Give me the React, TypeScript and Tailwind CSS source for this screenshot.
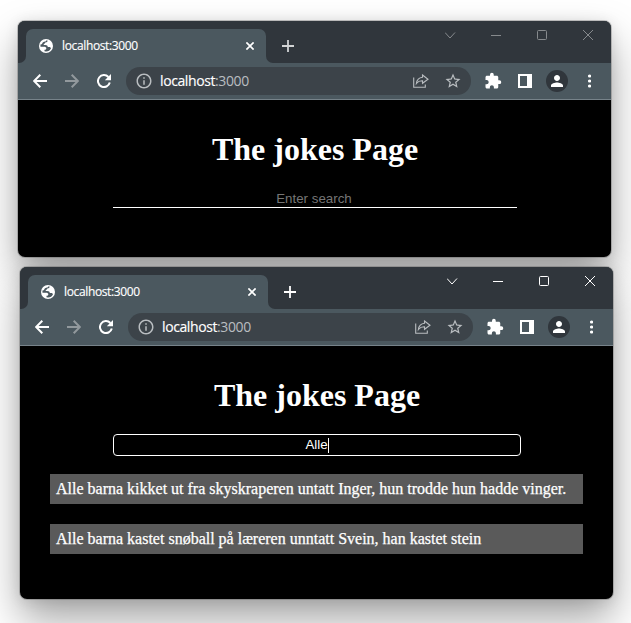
import type { ReactNode } from "react";
import { MdExtension, MdPerson, MdInfoOutline, MdStarBorder } from "react-icons/md";

function WindowControls({ active }: { active: boolean }) {
  return (
    <div className={`ml-auto flex items-start ${active ? "text-white" : "text-[#868a8d]"}`}>
      <svg className="mt-[9px] mr-[35px] h-[11px] w-[11px]" viewBox="0 0 11 11" fill="none" stroke="currentColor">
        <path d="M0 2.5 5 8 10 2.5" />
      </svg>
      <svg className="mt-[9px] mr-[36px] h-[11px] w-[10px]" viewBox="0 0 10 11" fill="none" stroke="currentColor">
        <path d="M0 5.5H10" />
      </svg>
      <svg className="mt-[9px] mr-[36px] h-[10px] w-[10px]" viewBox="0 0 10 10" fill="none" stroke="currentColor">
        <rect x=".5" y=".5" width="9" height="9" rx="1" />
      </svg>
      <svg className="mt-[9px] mr-[18px] h-[10px] w-[10px]" viewBox="0 0 10 10" fill="none" stroke="currentColor">
        <path d="M0 0 10 10M10 0 0 10" />
      </svg>
    </div>
  );
}

function GlobeIcon() {
  return (
    <svg className="ml-[2px] h-[14px] w-[14px]" viewBox="0 0 14 14">
      <circle cx="7" cy="7" r="7" fill="currentColor" />
      <path
        fill="#4b585f"
        d="M8.6 1.5C8.7 2.7 7.8 3.4 6.3 3.4 5.9 4.7 5.2 4.6 4.6 4.9 4.7 5.8 5.1 6 6.1 6 8 6 8.8 6.8 8.8 8H10.4C11 8 11.3 8.6 12.1 8.9 11.2 11.1 9.3 12.5 7 12.5L5.5 12.3V10.8C6.5 10.8 7.4 10.5 7.3 9.3 7.2 8.3 6.4 7.8 5.3 7.8H1.5C1.3 6.8 1.4 6 1.7 5.2H3C3.3 3.5 4.6 2.5 6.2 2.5 6.8 2.5 7 1.7 7.1 1.4Z"
      />
    </svg>
  );
}

function TitleBar({ active }: { active: boolean }) {
  return (
    <div className="flex h-[42px] bg-[#4b585f]">
      <div className="h-[42px] w-2 rounded-br-[7px] bg-[#30363c]" />
      <div className="h-[42px] w-60 bg-[linear-gradient(#30363c_50%,#4b585f_50%)] pt-2">
        <div className="flex h-[34px] items-center rounded-t-[7px] bg-[#4b585f] pl-[11px] text-white">
          <GlobeIcon />
          <span className="ml-[9px] font-['Open_Sans','Noto_Sans',sans-serif] text-[12px] leading-4 tracking-[-0.36px] [-webkit-text-stroke:0.15px_white]">localhost:3000</span>
          <svg className="mr-[12px] ml-auto h-2 w-2" viewBox="0 0 8 8" stroke="currentColor" strokeWidth="1.7">
            <path d="M.4.4 7.6 7.6M7.6.4.4 7.6" />
          </svg>
        </div>
      </div>
      <div className="flex h-[42px] flex-1 rounded-bl-[7px] bg-[#30363c]">
        <svg className={`mt-[19px] ml-4 h-3 w-3 ${active ? "text-white" : "text-[#d2d4d5]"}`} viewBox="0 0 12 12" stroke="currentColor" strokeWidth="1.8">
          <path d="M6 0V12M0 6H12" />
        </svg>
        <WindowControls active={active} />
      </div>
    </div>
  );
}

function Toolbar() {
  return (
    <div className="flex h-[37px] items-center border-b border-[#77838a] bg-[#4b585f] text-white">
      <svg className="ml-[15px] h-[14px] w-[14px]" viewBox="0 0 14 14" fill="none" stroke="currentColor" strokeWidth="2">
        <path d="M14 7H1.5M7.3.8 1.1 7 7.3 13.2" />
      </svg>
      <svg className="ml-[18px] h-[14px] w-[14px] text-[#92999d]" viewBox="0 0 14 14" fill="none" stroke="currentColor" strokeWidth="2">
        <path d="M0 7H12.5M6.7.8 12.9 7 6.7 13.2" />
      </svg>
      <svg className="ml-[18px] h-[14px] w-[14px]" viewBox="0 0 14 14" fill="none">
        <path d="M11.4 3A6 6 0 1 0 12.8 8.6" stroke="currentColor" strokeWidth="2" />
        <path d="M14 0V6.2H7.8Z" fill="currentColor" />
      </svg>
      <div className="ml-[15px] flex h-7 w-[345px] items-center rounded-full bg-[#3c4349] pl-[9px] text-[#b9bdc0]">
        <MdInfoOutline className="h-[18px] w-[18px]" />
        <span className="ml-[7px] font-['Open_Sans','Noto_Sans',sans-serif] text-[14px] leading-5 tracking-[-0.4px]">
          <span className="text-white [-webkit-text-stroke:0.15px_white]">localhost</span>:3000
        </span>
        <svg className="mr-[15px] ml-auto h-[14px] w-4" viewBox="0 0 16 14" fill="none" stroke="currentColor" strokeWidth="1.1">
          <path d="M.7 3.5V13.3H12.3V10.5M9.5 1 15 5.2 9.5 9.3V6.8C6.5 6.7 4.9 7.6 3.4 9.5 3.8 6.3 5.6 3.7 9.5 3.3Z" />
        </svg>
        <MdStarBorder className="mr-[9px] h-[18px] w-[18px]" />
      </div>
      <MdExtension className="ml-[13px] h-[18px] w-[18px]" />
      <svg className="ml-[16px] h-[14px] w-[14px]" viewBox="0 0 14 14">
        <path fill="currentColor" fillRule="evenodd" d="M0 0H14V14H0ZM2 2V12H9V2Z" />
      </svg>
      <div className="ml-[14px] flex h-[22px] w-[22px] items-center justify-center rounded-full bg-[#30363c]">
        <MdPerson className="h-[18px] w-[18px]" />
      </div>
      <svg className="ml-[19px] h-[14px] w-[4px]" viewBox="0 0 4 14" fill="currentColor">
        <circle cx="2.5" cy="2" r="1.6" />
        <circle cx="2.5" cy="7" r="1.6" />
        <circle cx="2.5" cy="12" r="1.6" />
      </svg>
    </div>
  );
}

function BrowserWindow({ active = false, className, children }: { active?: boolean; className: string; children: ReactNode }) {
  return (
    <section
      className={`w-[593px] shrink-0 overflow-hidden rounded-[7px] bg-black shadow-[0_0_0_1px_rgba(80,80,80,0.3),0_20px_40px_rgba(0,0,0,0.36),0_1px_14px_rgba(0,0,0,0.1)] ${className}`}
    >
      <TitleBar active={active} />
      <Toolbar />
      <h1 className="mt-[31px] pl-px text-center font-['Liberation_Serif',serif] text-[32px] leading-[37px] font-bold text-white">The jokes Page</h1>
      {children}
    </section>
  );
}

const jokes = [
  "Alle barna kikket ut fra skyskraperen untatt Inger, hun trodde hun hadde vinger.",
  "Alle barna kastet snøball på læreren unntatt Svein, han kastet stein",
];

export default function App() {
  return (
    <main className="flex h-[623px] w-[631px] flex-col overflow-hidden bg-white">
      <BrowserWindow className="mt-[21px] ml-[18px] h-[236px]">
        <div className="mt-5 ml-[95px] h-[20px] w-[404px] border-b border-white pr-0.5 text-center font-['Liberation_Sans',sans-serif] text-[13.333px] leading-[21px] text-[#757575]">
          Enter search
        </div>
      </BrowserWindow>
      <BrowserWindow active className="mt-[10px] ml-5 h-[332px]">
        <div className="mt-5 ml-[93px] flex h-[22px] w-[408px] items-center justify-center rounded-[4px] border border-white font-['Liberation_Sans',sans-serif] text-[13.333px] leading-none text-white">
          Alle
          <span className="h-[15px] w-px bg-white" />
        </div>
        <ul className="mt-[18px] ml-[30px] flex w-[533px] flex-col gap-5">
          {jokes.map((joke) => (
            <li
              key={joke}
              className="h-[30px] bg-[#5a5a5a] pl-1.5 font-['Liberation_Serif',serif] text-[16px] leading-[30px] whitespace-nowrap text-white [-webkit-text-stroke:0.25px_white]"
            >
              {joke}
            </li>
          ))}
        </ul>
      </BrowserWindow>
    </main>
  );
}
